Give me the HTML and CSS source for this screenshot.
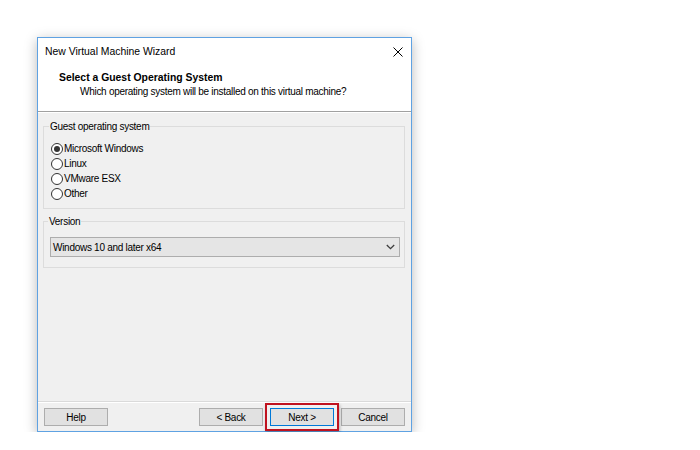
FILE: index.html
```html
<!DOCTYPE html>
<html lang="en">
<head>
  <meta charset="UTF-8">
  <title>New Virtual Machine Wizard</title>
  <link rel="stylesheet" href="styles.css">
</head>
<body>
  <div class="window">
    <div class="titlebar">
      <span class="title">New Virtual Machine Wizard</span>
      <svg class="close" width="10" height="10" viewBox="0 0 10 10">
        <path d="M0.5 0.5 L9.5 9.5 M9.5 0.5 L0.5 9.5" stroke="#000" stroke-width="1" fill="none"/>
      </svg>
    </div>

    <div class="header">
      <p class="heading">Select a Guest Operating System</p>
      <p class="subheading">Which operating system will be installed on this virtual machine?</p>
    </div>

    <div class="content">
      <fieldset class="group">
        <legend>Guest operating system</legend>
        <label class="radio"><span class="dot checked"></span>Microsoft Windows</label>
        <label class="radio"><span class="dot"></span>Linux</label>
        <label class="radio"><span class="dot"></span>VMware ESX</label>
        <label class="radio"><span class="dot"></span>Other</label>
      </fieldset>

      <fieldset class="group version">
        <legend>Version</legend>
        <div class="combo">
          <span>Windows 10 and later x64</span>
          <svg width="9" height="6" viewBox="0 0 9 6">
            <path d="M0.8 1 L4.5 4.6 L8.2 1" stroke="#3c3c3c" stroke-width="1.3" fill="none"/>
          </svg>
        </div>
      </fieldset>
    </div>

    <div class="footer">
      <button class="btn">Help</button>
      <div class="nav">
        <button class="btn">&lt; Back</button>
        <button class="btn default">Next &gt;</button>
        <button class="btn">Cancel</button>
      </div>
    </div>
  </div>
</body>
</html>
```

FILE: styles.css
```css
body {
  margin: 0;
  padding: 37px 0 0 37px;
  background-color: white;
  font-family: "Liberation Sans", Arial, sans-serif;
  font-size: 10px;
  letter-spacing: -0.28px;
  color: black;
}

p {
  margin: 0;
}

.window {
  box-sizing: border-box;
  width: 375px;
  height: 395px;
  border: 1px solid #5fa2e2;
  background-color: #f0f0f0;
  box-shadow: 0 3px 12px rgba(0, 0, 0, 0.28);
  display: flex;
  flex-direction: column;
}

.titlebar {
  height: 27px;
  background-color: white;
  display: flex;
  align-items: center;
  justify-content: space-between;
  padding: 0 7px 0 7px;
}

.title {
  font-size: 10.4px;
  letter-spacing: 0;
}

.close {
  margin-right: 1px;
}

.header {
  background-color: white;
  height: 47px;
  padding-top: 6px;
  box-sizing: border-box;
  border-bottom: 1px solid #a0a0a0;
  box-shadow: 0 1px 0 white;
}

.heading {
  font-weight: bold;
  font-size: 10.4px;
  letter-spacing: 0;
  line-height: 13px;
  padding-left: 21px;
}

.subheading {
  line-height: 13px;
  padding-left: 42px;
  margin-top: 1px;
}

.content {
  flex: 1;
  padding: 7px 6px 0 5px;
  margin-top: 1px;
}

.group {
  margin: 0;
  border: 1px solid #dcdcdc;
  padding: 8px 6px 7px 7px;
}

.group legend {
  padding: 0 1px;
  margin-left: -2px;
  line-height: 13px;
}

.radio {
  display: flex;
  align-items: center;
  height: 15px;
}

.dot {
  box-sizing: border-box;
  width: 12px;
  height: 12px;
  border: 1px solid #333;
  border-radius: 50%;
  background-color: white;
  margin-right: 1px;
  display: flex;
  align-items: center;
  justify-content: center;
}

.dot.checked::after {
  content: "";
  width: 6px;
  height: 6px;
  border-radius: 50%;
  background-color: #333;
}

.version {
  margin-top: 6px;
  padding: 9px 4px 10px 6px;
}

.combo {
  box-sizing: border-box;
  height: 20px;
  border: 1px solid #adadad;
  background-color: #e5e5e5;
  display: flex;
  align-items: center;
  justify-content: space-between;
  padding: 0 4px 0 2px;
}

.footer {
  border-top: 1px solid #dadada;
  box-shadow: inset 0 1px 0 white;
  height: 30px;
  box-sizing: border-box;
  padding: 6px 6px 0 6px;
  display: flex;
  justify-content: space-between;
}

.nav {
  display: flex;
  gap: 7px;
}

.btn {
  box-sizing: border-box;
  width: 64px;
  height: 18px;
  padding: 0;
  border: 1px solid #adadad;
  background-color: #e1e1e1;
  font-family: inherit;
  font-size: 10px;
  letter-spacing: -0.28px;
  color: black;
}

.btn.default {
  border-color: #0078d7;
  position: relative;
}

/* red highlight drawn over the screenshot */
.btn.default::after {
  content: "";
  position: absolute;
  left: -6px;
  top: -6px;
  right: -6px;
  bottom: -6px;
  border: 2px solid #c0121f;
  box-shadow: 1px 2px 3px rgba(0, 0, 0, 0.25);
}
```
